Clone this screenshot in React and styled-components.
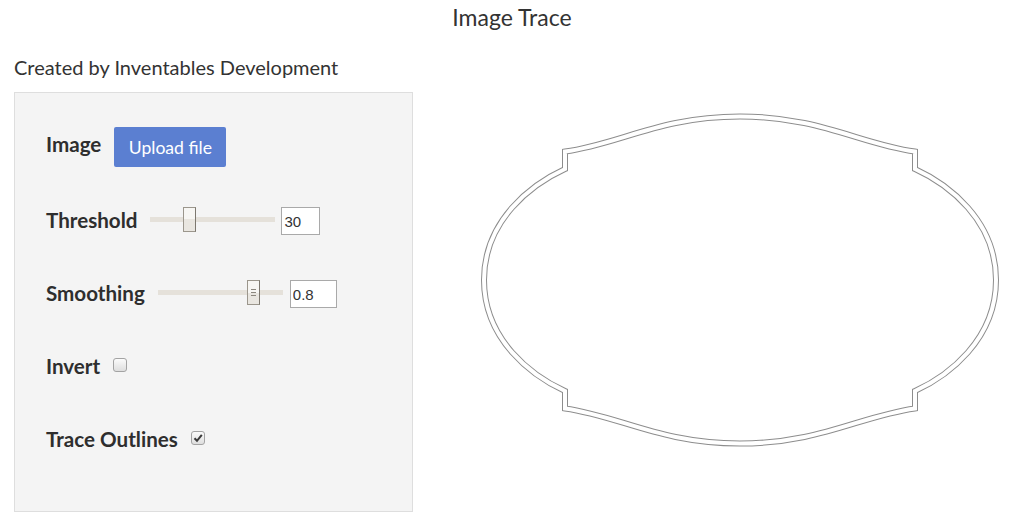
import React from 'react';
import styled, { createGlobalStyle } from 'styled-components';

const GlobalStyle = createGlobalStyle`
  body {
    margin: 0;
    background: #ffffff;
    font-family: Lato, 'Open Sans', sans-serif;
    color: #333333;
  }
`;

const Title = styled.h1`
  margin: 0;
  padding-left: 7px;
  font-size: 23px;
  font-weight: 400;
  line-height: 34px;
  text-align: center;
  color: #333;
`;

const Page = styled.div`
  padding-left: 14px;
`;

const Credit = styled.div`
  margin: 20px 0 12px;
  font-size: 20px;
  line-height: 26px;
`;

const Main = styled.div`
  display: flex;
  align-items: flex-start;
`;

const Panel = styled.div`
  box-sizing: border-box;
  width: 399px;
  height: 420px;
  padding: 17px 0 0 31px;
  background: #f4f4f4;
  border: 1px solid #dedede;
`;

const Row = styled.div`
  display: flex;
  align-items: center;
  height: 73px;
`;

const Label = styled.label`
  position: relative;
  top: ${(p) => p.lift || 0}px;
  margin-right: 13px;
  font-size: 20.6px;
  font-weight: 700;
  color: #2e2e2e;
`;

const UploadButton = styled.button`
  width: 112px;
  height: 40px;
  margin-top: 1px;
  padding: 0;
  border: none;
  border-radius: 2px;
  background: #5b7fd1;
  color: #fff;
  font-family: Lato, sans-serif;
  font-size: 17.6px;
`;

const Track = styled.div`
  position: relative;
  width: 125px;
  height: 5px;
  margin-right: ${(p) => p.gap}px;
  background: #e5e1da;
`;

const Thumb = styled.div`
  position: absolute;
  top: -10px;
  left: ${(p) => p.left}px;
  box-sizing: border-box;
  width: 13px;
  height: 25px;
  border: 1px solid #9b968c;
  border-right-color: #7d786f;
  background: linear-gradient(#f7f6f3 0%, #f7f6f3 50%, #e9e6e0 50%, #e9e6e0 100%);
  display: flex;
  flex-direction: column;
  align-items: center;
  justify-content: center;
  gap: 2px;
`;

const Grip = styled.span`
  display: block;
  width: 5px;
  height: 1px;
  background: #8c877e;
`;

const NumberBox = styled.input`
  box-sizing: border-box;
  width: ${(p) => p.w}px;
  height: 28px;
  margin-top: 3px;
  padding: 0 2px;
  border: 1px solid #a9a9a9;
  background: #fff;
  font-family: 'Liberation Sans', Arial, sans-serif;
  font-size: 15px;
  color: #333;
  outline: none;
`;

const Check = styled.span`
  box-sizing: border-box;
  display: flex;
  align-items: center;
  justify-content: center;
  width: 14px;
  height: 14px;
  margin-top: -2px;
  border: 1px solid #a3a3a3;
  border-radius: 3px;
  background: linear-gradient(#fbfbfb, #dedede);
`;

const Drawing = styled.svg`
  flex: none;
  margin: 13px 0 0 57px;
`;

function Slider({ left, grip, gap }) {
  return (
    <Track gap={gap}>
      <Thumb left={left}>
        {grip && (
          <>
            <Grip />
            <Grip />
            <Grip />
          </>
        )}
      </Thumb>
    </Track>
  );
}

function Checkbox({ checked }) {
  return (
    <Check>
      {checked && (
        <svg width="10" height="10" viewBox="0 0 10 10">
          <path d="M1.5 5.2 L4 7.8 L8.8 1.8" fill="none" stroke="#3a3a3a" strokeWidth="2" />
        </svg>
      )}
    </Check>
  );
}

const outline =
  'M -175,-128.5 C -120,-136 -80,-163.5 0,-163.5 C 80,-163.5 120,-136 175,-128.5 ' +
  'L 175,-111 C 208,-96 256,-60 256,0 C 256,60 208,96 175,111 ' +
  'L 175,128.5 C 120,136 80,163.5 0,163.5 C -80,163.5 -120,136 -175,128.5 ' +
  'L -175,111 C -208,96 -256,60 -256,0 C -256,-60 -208,-96 -175,-111 Z';

export default function App() {
  return (
    <>
      <GlobalStyle />
      <Title>Image Trace</Title>
      <Page>
        <Credit>Created by Inventables Development</Credit>
        <Main>
          <Panel>
            <Row>
              <Label lift={-3}>Image</Label>
              <UploadButton>Upload file</UploadButton>
            </Row>
            <Row>
              <Label>Threshold</Label>
              <Slider left={33} gap={6} />
              <NumberBox w={39} defaultValue="30" />
            </Row>
            <Row>
              <Label>Smoothing</Label>
              <Slider left={89} grip gap={7} />
              <NumberBox w={47} defaultValue="0.8" />
            </Row>
            <Row>
              <Label>Invert</Label>
              <Checkbox />
            </Row>
            <Row>
              <Label>Trace Outlines</Label>
              <Checkbox checked />
            </Row>
          </Panel>
          <Drawing width="540" height="350" viewBox="0 0 540 350">
            <g transform="translate(270 175)" fill="none" strokeLinejoin="miter">
              <path d={outline} stroke="#8d8d8d" strokeWidth="6" />
              <path d={outline} stroke="#ffffff" strokeWidth="4" />
            </g>
          </Drawing>
        </Main>
      </Page>
    </>
  );
}
